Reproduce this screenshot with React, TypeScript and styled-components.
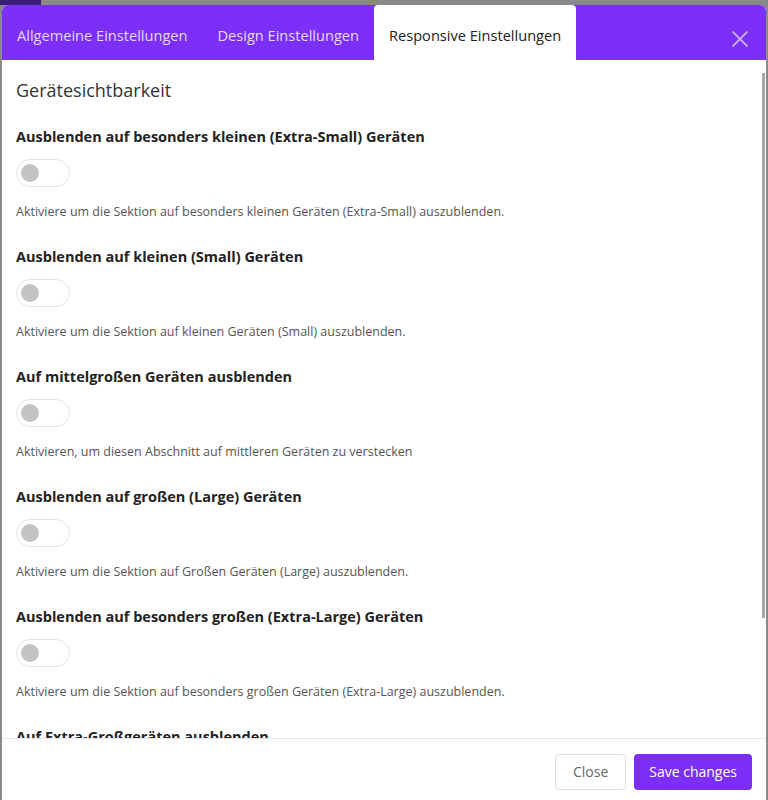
import React, { useState } from "react";
import styled, { createGlobalStyle } from "styled-components";

const purple = "#7b2ff7";

const sections = [
  {
    title: "Ausblenden auf besonders kleinen (Extra-Small) Geräten",
    hint: "Aktiviere um die Sektion auf besonders kleinen Geräten (Extra-Small) auszublenden.",
  },
  {
    title: "Ausblenden auf kleinen (Small) Geräten",
    hint: "Aktiviere um die Sektion auf kleinen Geräten (Small) auszublenden.",
  },
  {
    title: "Auf mittelgroßen Geräten ausblenden",
    hint: "Aktivieren, um diesen Abschnitt auf mittleren Geräten zu verstecken",
  },
  {
    title: "Ausblenden auf großen (Large) Geräten",
    hint: "Aktiviere um die Sektion auf Großen Geräten (Large) auszublenden.",
  },
  {
    title: "Ausblenden auf besonders großen (Extra-Large) Geräten",
    hint: "Aktiviere um die Sektion auf besonders großen Geräten (Extra-Large) auszublenden.",
  },
  {
    title: "Auf Extra-Großgeräten ausblenden",
    hint: "Aktivieren, um diesen Abschnitt auf Extra-Großgeräten zu verstecken",
  },
];

const tabs = ["Allgemeine Einstellungen", "Design Einstellungen", "Responsive Einstellungen"];

const App: React.FC = () => {
  const [activeTab, setActiveTab] = useState(2);
  const [hidden, setHidden] = useState<boolean[]>(sections.map(() => false));

  const toggle = (index: number) =>
    setHidden((prev) => prev.map((value, i) => (i === index ? !value : value)));

  return (
    <>
      <GlobalStyle />
      <Backdrop>
        <BackdropStrip>
          <BackdropBlock />
        </BackdropStrip>
        <Modal>
          <Header>
            <TabList>
              {tabs.map((label, i) => (
                <Tab key={label} $active={i === activeTab} onClick={() => setActiveTab(i)}>
                  {label}
                </Tab>
              ))}
            </TabList>
            <CloseIcon aria-label="Schließen">
              <svg width="16" height="16" viewBox="0 0 16 16">
                <path d="M1 1 L15 15 M15 1 L1 15" stroke="currentColor" strokeWidth="1.8" strokeLinecap="round" />
              </svg>
            </CloseIcon>
          </Header>

          <BodyFrame>
            <Body>
              <Heading>Gerätesichtbarkeit</Heading>
              {sections.map((section, i) => (
                <Setting key={section.title}>
                  <SettingTitle>{section.title}</SettingTitle>
                  <Switch $on={hidden[i]} onClick={() => toggle(i)} role="switch" aria-checked={hidden[i]}>
                    <Knob $on={hidden[i]} />
                  </Switch>
                  <Hint>{section.hint}</Hint>
                </Setting>
              ))}
            </Body>
            <ScrollThumb />
          </BodyFrame>

          <Footer>
            <GhostButton>Close</GhostButton>
            <PrimaryButton>Save changes</PrimaryButton>
          </Footer>
        </Modal>
      </Backdrop>
    </>
  );
};
export default App;

const GlobalStyle = createGlobalStyle`
  html, body {
    margin: 0;
    height: 100%;
    overflow: hidden;
    background: #898989;
  }
  body {
    font-family: "Open Sans", "Liberation Sans", sans-serif;
  }
`;

const Backdrop = styled.div`
  display: flex;
  flex-direction: column;
  padding: 0 2px;
  height: 800px;
`;
const BackdropStrip = styled.div`
  height: 5px;
  margin: 0 -2px;
  display: flex;
`;
const BackdropBlock = styled.div`
  width: 41px;
  background: #3b1d7a;
`;
const Modal = styled.div`
  display: flex;
  flex-direction: column;
  height: 800px;
  background: #fff;
  border-radius: 6px 6px 0 0;
  overflow: hidden;
`;
const Header = styled.div`
  display: flex;
  align-items: stretch;
  justify-content: space-between;
  height: 55px;
  flex: none;
  background: ${purple};
`;
const TabList = styled.div`
  display: flex;
  align-items: stretch;
`;
const Tab = styled.button<{ $active: boolean }>`
  display: flex;
  align-items: center;
  padding: 6px 15px 0;
  border: none;
  border-radius: ${(p) => (p.$active ? "4px 4px 0 0" : "0")};
  background: ${(p) => (p.$active ? "#fff" : "transparent")};
  color: ${(p) => (p.$active ? "#222" : "#e4d8ff")};
  font-family: inherit;
  font-size: 14.6px;
  cursor: pointer;
`;
const CloseIcon = styled.button`
  align-self: center;
  margin: 13px 18px 0 0;
  padding: 0;
  border: none;
  background: transparent;
  color: #c9aafc;
  display: flex;
  cursor: pointer;
`;
const BodyFrame = styled.div`
  position: relative;
  flex: none;
  height: 678px;
`;
const Body = styled.div`
  height: 100%;
  overflow: hidden;
  padding: 0 14px;
  box-sizing: border-box;
`;
const ScrollThumb = styled.div`
  position: absolute;
  top: 13px;
  right: 1px;
  width: 3px;
  height: 545px;
  background: #a8a8a8;
`;
const Heading = styled.h2`
  margin: 17px 0 24px;
  font-size: 18px;
  font-weight: 400;
  line-height: 26px;
  color: #333;
`;
const Setting = styled.div`
  display: flex;
  flex-direction: column;
  align-items: flex-start;
  margin-bottom: 26px;
`;
const SettingTitle = styled.div`
  font-size: 14.5px;
  font-weight: 700;
  line-height: 20px;
  color: #222;
`;
const Switch = styled.button<{ $on: boolean }>`
  position: relative;
  margin: 12px 0 16px;
  width: 54px;
  height: 28px;
  padding: 0;
  border: 1px solid #e3e3e3;
  border-radius: 14px;
  background: ${(p) => (p.$on ? purple : "#fff")};
  cursor: pointer;
`;
const Knob = styled.span<{ $on: boolean }>`
  position: absolute;
  top: 4px;
  left: ${(p) => (p.$on ? "31px" : "4px")};
  width: 18px;
  height: 18px;
  border-radius: 50%;
  background: ${(p) => (p.$on ? "#fff" : "#c2c2c2")};
`;
const Hint = styled.div`
  font-size: 12.5px;
  line-height: 18px;
  color: #555;
`;
const Footer = styled.div`
  flex: none;
  display: flex;
  justify-content: flex-end;
  gap: 8px;
  padding: 15px 14px;
  border-top: 1px solid #e6e6ec;
`;
const GhostButton = styled.button`
  height: 36px;
  padding: 0 17px;
  border: 1px solid #dcdcdc;
  border-radius: 4px;
  background: #fff;
  color: #666;
  font-family: inherit;
  font-size: 14px;
`;
const PrimaryButton = styled.button`
  height: 36px;
  padding: 0 15px;
  border: none;
  border-radius: 4px;
  background: ${purple};
  color: #fff;
  font-family: inherit;
  font-size: 14px;
`;
